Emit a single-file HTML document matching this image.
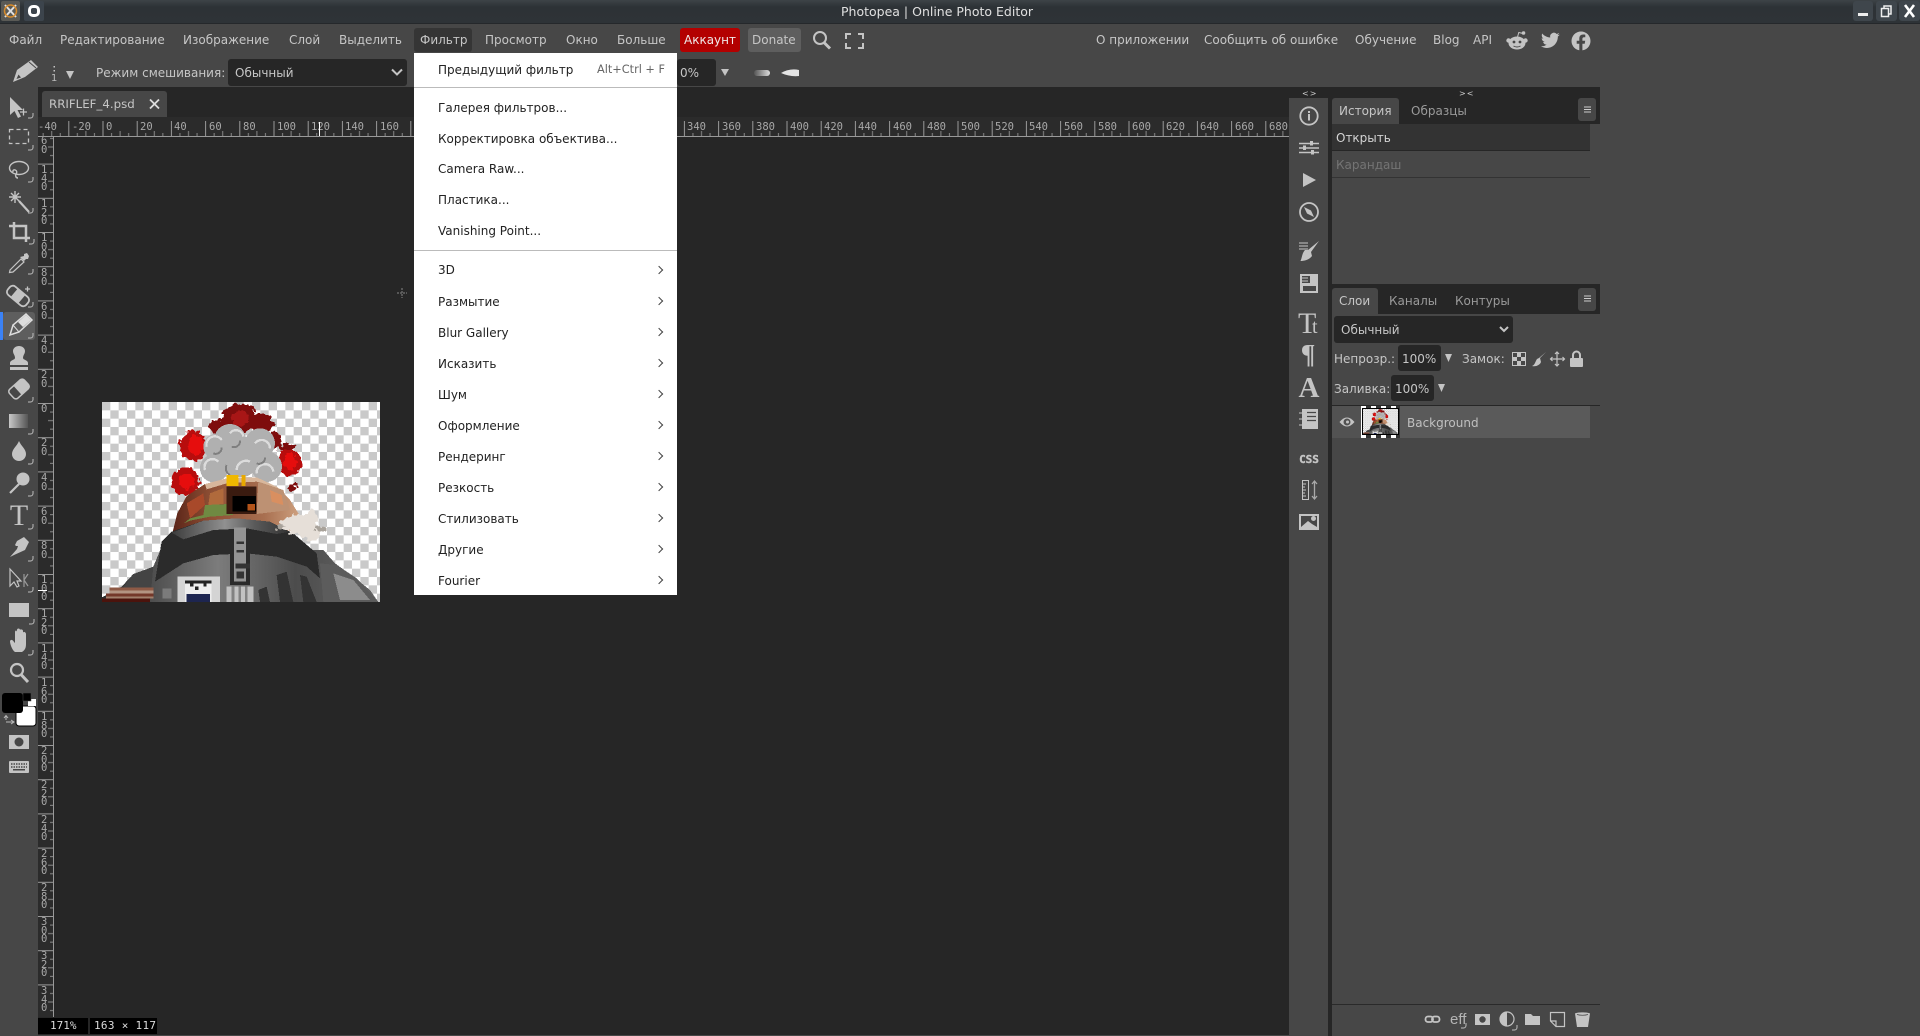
<!DOCTYPE html>
<html lang="ru"><head><meta charset="utf-8"><title>Photopea</title>
<style>
html,body{margin:0;padding:0;background:#474747;width:1920px;height:1036px;overflow:hidden}
body{position:relative;font-family:"DejaVu Sans","Liberation Sans",sans-serif;font-size:12px;color:#c6c6c6}
.a{position:absolute}
.t{position:absolute;white-space:nowrap;line-height:16px;height:16px}
.m{font-size:12px;color:#c6c6c6;top:32px}
.mi{position:absolute;left:438px;white-space:nowrap;color:#222;line-height:16px;font-size:12px}
.ch{position:absolute;left:656px;width:5px;height:5px;border-top:1.3px solid #444;border-right:1.3px solid #444;transform:rotate(45deg)}
.rt b{position:absolute;top:121px;font:10.5px/12px "DejaVu Sans Mono","Liberation Mono",monospace;color:#a8a8a8}
.rl b{position:absolute;left:41px;font:10.5px/8.6px "DejaVu Sans Mono","Liberation Mono",monospace;color:#a8a8a8;width:7px}
svg{position:absolute;left:0;top:0}
</style></head><body>
<!-- title bar -->
<div class="a" style="left:0;top:0;width:1920px;height:23px;background:linear-gradient(#3d4347,#2d3236 30%,#2e3337);border-bottom:1px solid #25282b"></div>
<div class="t" style="left:841px;top:4px;color:#e0e0e0;font-size:12.5px">Photopea | Online Photo Editor</div>
<div class="a" style="left:1px;top:1px;width:19px;height:20px;background:#5a5a56;border-radius:2px"></div>
<div class="a" style="left:24px;top:1px;width:20px;height:20px;background:#3c444c;border-radius:2px"></div>
<div class="a" style="left:1853px;top:1px;width:20px;height:20px;background:#3f464c;border-radius:3px"></div>
<div class="a" style="left:1876px;top:1px;width:21px;height:20px;background:#3f464c;border-radius:3px"></div>
<div class="a" style="left:1899px;top:1px;width:21px;height:20px;background:#3f464c;border-radius:3px"></div>

<!-- menu bar -->
<div class="a" style="left:414px;top:28px;width:58px;height:24px;background:#353535;border-radius:3px"></div>
<div class="t m" style="left:9px">Файл</div>
<div class="t m" style="left:60px">Редактирование</div>
<div class="t m" style="left:183px">Изображение</div>
<div class="t m" style="left:289px">Слой</div>
<div class="t m" style="left:339px">Выделить</div>
<div class="t m" style="left:420px">Фильтр</div>
<div class="t m" style="left:485px">Просмотр</div>
<div class="t m" style="left:566px">Окно</div>
<div class="t m" style="left:617px">Больше</div>
<div class="a" style="left:680px;top:28px;width:60px;height:24px;background:#b30000;border-radius:3px"></div>
<div class="t m" style="left:684px;color:#f0e8e8">Аккаунт</div>
<div class="a" style="left:748px;top:28px;width:53px;height:24px;background:#5e5e5e;border-radius:3px"></div>
<div class="t m" style="left:752px">Donate</div>
<div class="t m" style="left:1096px">О приложении</div>
<div class="t m" style="left:1204px">Сообщить об ошибке</div>
<div class="t m" style="left:1355px">Обучение</div>
<div class="t m" style="left:1433px">Blog</div>
<div class="t m" style="left:1473px">API</div>

<!-- options bar -->
<div class="t" style="left:51px;top:71px;font-size:10px;color:#bbb">1</div>
<div class="t" style="left:96px;top:65px">Режим смешивания:</div>
<div class="a" style="left:228px;top:59px;width:179px;height:27px;background:#262626;border-radius:3px"></div>
<div class="t" style="left:235px;top:65px">Обычный</div>
<div class="a" style="left:677px;top:59px;width:39px;height:27px;background:#262626;border-radius:3px"></div>
<div class="t" style="left:680px;top:65px">0%</div>

<!-- dark work area -->
<div class="a" style="left:38px;top:87px;width:1251px;height:948px;background:#262626"></div>
<div class="a" style="left:42px;top:91px;width:125px;height:26px;background:#474747;border-radius:3px 3px 0 0"></div>
<div class="t" style="left:49px;top:96px;color:#c6c6c6;font-size:11.8px">RRIFLEF_4.psd</div>
<div class="a" style="left:38px;top:117px;width:1251px;height:20px;background:#2b2b2b"></div>
<div class="a" style="left:38px;top:137px;width:15px;height:880px;background:#2b2b2b"></div>

<!-- top ruler labels -->
<div class="rt">
<b style="left:38px">-40</b><b style="left:72px">-20</b><b style="left:106px">0</b><b style="left:140px">20</b><b style="left:174px">40</b><b style="left:209px">60</b><b style="left:243px">80</b><b style="left:277px">100</b><b style="left:311px">120</b><b style="left:345px">140</b><b style="left:380px">160</b>
<b style="left:687px">340</b><b style="left:722px">360</b><b style="left:756px">380</b><b style="left:790px">400</b><b style="left:824px">420</b><b style="left:858px">440</b><b style="left:893px">460</b><b style="left:927px">480</b><b style="left:961px">500</b><b style="left:995px">520</b><b style="left:1029px">540</b><b style="left:1064px">560</b><b style="left:1098px">580</b><b style="left:1132px">600</b><b style="left:1166px">620</b><b style="left:1200px">640</b><b style="left:1235px">660</b><b style="left:1269px">680</b>
</div>
<!-- left ruler labels -->
<div class="rl">
<b style="top:137px">6<br>0</b>
<b style="top:166px">1<br>4<br>0</b>
<b style="top:200px">1<br>2<br>0</b>
<b style="top:234px">1<br>0<br>0</b>
<b style="top:269px">8<br>0</b>
<b style="top:303px">6<br>0</b>
<b style="top:337px">4<br>0</b>
<b style="top:371px">2<br>0</b>
<b style="top:405px">0</b>
<b style="top:439px">2<br>0</b>
<b style="top:474px">4<br>0</b>
<b style="top:508px">6<br>0</b>
<b style="top:542px">8<br>0</b>
<b style="top:576px">1<br>0<br>0</b>
<b style="top:610px">1<br>2<br>0</b>
<b style="top:645px">1<br>4<br>0</b>
<b style="top:679px">1<br>6<br>0</b>
<b style="top:713px">1<br>8<br>0</b>
<b style="top:747px">2<br>0<br>0</b>
<b style="top:781px">2<br>2<br>0</b>
<b style="top:816px">2<br>4<br>0</b>
<b style="top:850px">2<br>6<br>0</b>
<b style="top:884px">2<br>8<br>0</b>
<b style="top:918px">3<br>0<br>0</b>
<b style="top:952px">3<br>2<br>0</b>
<b style="top:987px">3<br>4<br>0</b>
</div>

<!-- status boxes -->
<div class="a" style="left:38px;top:1018px;width:50px;height:16px;background:#000"></div>
<div class="a" style="left:90px;top:1018px;width:67px;height:16px;background:#000"></div>
<div class="t" style="left:50px;top:1018px;color:#ddd;font-size:11px;font-family:'DejaVu Sans Mono',monospace">171%</div>
<div class="t" style="left:94px;top:1018px;color:#ddd;font-size:11px;letter-spacing:.3px;font-family:'DejaVu Sans Mono',monospace">163 × 117</div>

<!-- image -->
<svg width="278" height="200" viewBox="36 36 834 600" style="left:102px;top:402px" shape-rendering="crispEdges">
<defs>
<pattern id="chk" width="50" height="50" patternUnits="userSpaceOnUse" x="36" y="36"><rect x="-1" y="-1" width="52" height="52" fill="#fff"/><rect width="25" height="25" fill="#c9c9c9"/><rect x="25" y="25" width="25" height="25" fill="#c9c9c9"/></pattern>
<filter id="rg" x="-10%" y="-10%" width="120%" height="120%"><feTurbulence type="fractalNoise" baseFrequency=".07" numOctaves="2" seed="4" result="n"/><feDisplacementMap in="SourceGraphic" in2="n" scale="26" xChannelSelector="R" yChannelSelector="G"/></filter>
<linearGradient id="cl" x1="0" x2="1" y1="0" y2="0"><stop offset="0" stop-color="#3c3c3c"/><stop offset=".45" stop-color="#909090"/><stop offset=".7" stop-color="#5a5a5a"/><stop offset="1" stop-color="#333"/></linearGradient>
<linearGradient id="dm" x1="0" x2="1" y1="0" y2="0"><stop offset="0" stop-color="#5a2418"/><stop offset=".3" stop-color="#8f5035"/><stop offset=".7" stop-color="#a86f50"/><stop offset="1" stop-color="#d2a684"/></linearGradient>
<linearGradient id="bd" x1="0" x2="1" y1="0" y2="0"><stop offset="0" stop-color="#2c2c2c"/><stop offset=".42" stop-color="#7c7c7c"/><stop offset=".7" stop-color="#4c4c4c"/><stop offset="1" stop-color="#666"/></linearGradient>
<g id="robot">
<rect x="36" y="36" width="834" height="600" fill="url(#chk)"/>
<!-- blood blobs -->
<g filter="url(#rg)">
<g fill="#7e0a0a"><ellipse cx="448" cy="85" rx="52" ry="44"/><ellipse cx="390" cy="110" rx="34" ry="24"/><ellipse cx="515" cy="100" rx="36" ry="28"/><ellipse cx="555" cy="150" rx="20" ry="28"/><ellipse cx="606" cy="293" rx="15" ry="10"/><ellipse cx="592" cy="172" rx="24" ry="9"/></g>
<ellipse cx="450" cy="85" rx="26" ry="22" fill="#a81616"/>
<g fill="#b80808"><ellipse cx="310" cy="168" rx="40" ry="46"/><ellipse cx="287" cy="275" rx="42" ry="42"/><ellipse cx="597" cy="218" rx="38" ry="40"/></g>
<g fill="#e60f0f"><ellipse cx="318" cy="165" rx="24" ry="30"/><ellipse cx="600" cy="215" rx="20" ry="24"/><ellipse cx="290" cy="272" rx="24" ry="26"/></g>
</g>
<!-- smoke -->
<g fill="#b0b0b0"><circle cx="420" cy="150" r="48"/><circle cx="510" cy="160" r="45"/><circle cx="378" cy="170" r="38"/><circle cx="372" cy="235" r="42"/><circle cx="450" cy="200" r="62"/><circle cx="530" cy="230" r="46"/></g>
<g fill="none" stroke="#dcdcdc" stroke-width="7"><path d="M350 170a25 25 0 0 1 45-20"/><path d="M420 130a22 22 0 0 1 40 10"/><path d="M495 160a25 25 0 0 1 45 15"/><path d="M440 240a28 28 0 0 1 40-25"/><path d="M500 250a24 24 0 0 1 50-5"/><path d="M345 240a24 24 0 0 1 40-25"/></g>
<g fill="none" stroke="#7f7f7f" stroke-width="6"><path d="M370 190a18 18 0 0 0 25-18"/><path d="M500 220a18 18 0 0 0 25-18"/><path d="M425 170a18 18 0 0 0 25-18"/><path d="M420 255a22 22 0 0 1-10-30"/></g>
<!-- dome -->
<path d="M248 425L262 370L290 318L345 282L410 265L500 262L560 290L600 330L625 370L640 420L250 430Z" fill="url(#dm)"/>
<path d="M345 282L410 265L500 262L560 290L570 300L500 275L410 280L350 298Z" fill="#d8b79c"/>
<path d="M290 340L340 310L345 345L300 385Z" fill="#a8492a"/><path d="M360 310L400 295L400 342L355 345Z" fill="#b06a3c"/>
<path d="M282 400L300 385L340 375L345 345L420 342L430 375L360 380L300 392Z" fill="#6f8a42"/>
<path d="M410 290H500V372H410Z" fill="#3a1b10"/><path d="M428 318H498V365H428Z" fill="#000"/><path d="M472 342H495V362H472Z" fill="#b3541a"/>
<path d="M505 275L580 300L600 360L500 372Z" fill="#bd9173"/><path d="M540 300L575 315L580 345L545 335Z" fill="#d98f60"/>
<path d="M410 255H446V288H410Z" fill="#f0b800"/><path d="M455 255H466V288H455Z" fill="#e8a800"/>
<!-- lower body -->
<path d="M36 622L95 590L130 552L190 530L215 470L700 480L735 520L790 560L840 600L865 636H36Z" fill="url(#bd)"/>
<!-- collar -->
<path d="M245 425L340 392L440 385L540 395L610 430L680 490L690 565L650 530L560 500L470 490L370 495L280 520L195 575L215 455Z" fill="#2b2b2b"/>
<path d="M245 428L340 392L440 385L540 395L600 425L560 432L470 415L370 420L280 448Z" fill="url(#cl)"/>
<path d="M690 520L740 525L800 565L865 636H700Z" fill="#5c5c5c"/><path d="M730 550L790 570L840 630L750 630Z" fill="#8c8c8c"/>
<path d="M130 552L190 530L180 636H70Z" fill="#444"/>
<g fill="#333"><path d="M560 555L590 545L610 636H570Z"/><path d="M630 555L650 560L680 636H640Z"/><path d="M505 600L530 590L540 636H510Z"/></g>
<!-- center ladder -->
<path d="M420 490H480V585H420Z" fill="#2a2a2a"/><path d="M432 412H468V575H432Z" fill="#949494"/><g fill="#333"><path d="M440 455H462V462H440Z"/><path d="M440 480H462V487H440Z"/><path d="M436 520H480V535H436Z"/><path d="M440 545H462V565H440Z"/></g>
<path d="M410 590H490V636H410Z" fill="#c2c2c2"/><g fill="#828282"><path d="M425 590H433V636H425Z"/><path d="M445 590H453V636H445Z"/><path d="M465 590H473V636H465Z"/></g>
<!-- panel -->
<path d="M262 560H390V636H262Z" fill="#d4d4d4"/><path d="M285 572H365V636H285Z" fill="#eee"/><path d="M285 572H365V580H285Z" fill="#222"/><path d="M290 612H360V636H290Z" fill="#1d2550"/><path d="M300 580H310V590H300ZM340 580H350V590H340ZM315 590H325V600H315Z" fill="#222"/>
<path d="M218 595H245V625H218Z" fill="#7b7b7b"/>
<!-- brown bands -->
<path d="M58 592H190V602H58Z" fill="#8e5a46"/><path d="M48 610H190V620H48Z" fill="#74382a"/><path d="M36 625H180V636H36Z" fill="#4b130c"/><path d="M58 602H190V610H58Z" fill="#b39482"/><path d="M48 620H190V625H48Z" fill="#a17f6c"/>
<!-- white smoke -->
<g filter="url(#rg)"><g fill="#e6dfd8"><ellipse cx="630" cy="405" rx="52" ry="30"/><ellipse cx="665" cy="385" rx="20" ry="24"/><ellipse cx="600" cy="400" rx="30" ry="16"/><ellipse cx="665" cy="430" rx="30" ry="20"/></g>
<g fill="#a8a29a"><ellipse cx="690" cy="415" rx="16" ry="8"/><ellipse cx="570" cy="410" rx="14" ry="8"/></g></g>
</g></defs>
<use href="#robot"/>
</svg>

<!-- right column groups -->
<div class="a" style="left:1289px;top:98px;width:39px;height:130px;background:#474747"></div>
<div class="a" style="left:1289px;top:233px;width:39px;height:68px;background:#474747"></div>
<div class="a" style="left:1289px;top:305px;width:39px;height:132px;background:#474747"></div>
<div class="a" style="left:1289px;top:441px;width:39px;height:98px;background:#474747"></div>
<div class="a" style="left:1289px;top:544px;width:39px;height:492px;background:#474747"></div>
<div class="a" style="left:1289px;top:87px;width:311px;height:11px;background:#262626"></div>
<div class="a" style="left:1328px;top:87px;width:4px;height:949px;background:#262626"></div>
<div class="a" style="left:1280px;top:1035px;width:9px;height:1px;background:#474747"></div>
<div class="t" style="left:1302px;top:86px;font-size:8px;color:#ccc;letter-spacing:1px">&lt;&gt;</div>
<div class="t" style="left:1459px;top:86px;font-size:8px;color:#ccc;letter-spacing:1px">&gt;&lt;</div>

<!-- history panel -->
<div class="a" style="left:1332px;top:98px;width:268px;height:26px;background:#262626"></div>
<div class="a" style="left:1332px;top:98px;width:67px;height:26px;background:#474747;border-radius:3px 3px 0 0"></div>
<div class="t" style="left:1339px;top:103px">История</div>
<div class="t" style="left:1411px;top:103px;color:#9a9a9a">Образцы</div>
<div class="a" style="left:1578px;top:98px;width:18px;height:23px;background:#474747;border-radius:3px"></div>
<div class="a" style="left:1332px;top:124px;width:258px;height:26px;background:#333;border-bottom:1px solid #262626"></div>
<div class="t" style="left:1336px;top:130px;color:#d4d4d4">Открыть</div>
<div class="a" style="left:1332px;top:151px;width:258px;height:26px;border-bottom:1px solid #333"></div>
<div class="t" style="left:1336px;top:157px;color:#747474">Карандаш</div>

<!-- layers panel -->
<div class="a" style="left:1332px;top:284px;width:268px;height:30px;background:#262626"></div>
<div class="a" style="left:1332px;top:288px;width:46px;height:26px;background:#474747;border-radius:3px 3px 0 0"></div>
<div class="t" style="left:1339px;top:293px">Слои</div>
<div class="t" style="left:1389px;top:293px;color:#9a9a9a">Каналы</div>
<div class="t" style="left:1455px;top:293px;color:#9a9a9a">Контуры</div>
<div class="a" style="left:1578px;top:288px;width:18px;height:23px;background:#474747;border-radius:3px"></div>
<div class="a" style="left:1334px;top:316px;width:179px;height:27px;background:#262626;border-radius:3px"></div>
<div class="t" style="left:1341px;top:322px">Обычный</div>
<div class="t" style="left:1334px;top:351px">Непрозр.:</div>
<div class="a" style="left:1398px;top:345px;width:43px;height:26px;background:#262626;border-radius:3px"></div>
<div class="t" style="left:1402px;top:351px">100%</div>
<div class="t" style="left:1462px;top:351px">Замок:</div>
<div class="t" style="left:1334px;top:381px">Заливка:</div>
<div class="a" style="left:1391px;top:375px;width:43px;height:26px;background:#262626;border-radius:3px"></div>
<div class="t" style="left:1395px;top:381px">100%</div>
<div class="a" style="left:1332px;top:405px;width:268px;height:1px;background:#262626"></div>
<div class="a" style="left:1332px;top:406px;width:258px;height:32px;background:#5a5a5a"></div>
<div class="a" style="left:1332px;top:406px;width:29px;height:32px;background:#525252"></div>
<div class="t" style="left:1407px;top:415px;color:#c0c0c0">Background</div>
<div class="a" style="left:1361px;top:406px;width:39px;height:32px;background:repeating-linear-gradient(90deg,#fff 0 5px,#333 5px 10px)"></div>
<svg width="35" height="25" viewBox="36 36 834 600" preserveAspectRatio="none" style="left:1363px;top:409px;outline:1px solid #000"><use href="#robot"/></svg>
<div class="a" style="left:1332px;top:1004px;width:268px;height:1px;background:#2a2a2a"></div>

<!-- all icons overlay -->
<svg width="1920" height="1036" viewBox="0 0 1920 1036" fill="#c4c4c4">
<defs><path id="cn" d="M5 0V2.5A2.5 2.5 0 0 1 2.5 5H0" fill="none" stroke="#bdbdbd" stroke-width="1"/>
<linearGradient id="gr"><stop offset="0" stop-color="#c8c8c8"/><stop offset="1" stop-color="#555"/></linearGradient></defs>

<!-- title bar icons -->
<path d="M5 5L16 17M16 5L5 17" stroke="#e0e0e0" stroke-width="2"/><circle cx="10.5" cy="11" r="6" fill="none" stroke="#d58a2c" stroke-width="1.5"/>
<rect x="29.5" y="6.5" width="9" height="9" rx="3.5" fill="none" stroke="#fff" stroke-width="3"/>
<rect x="1858" y="13" width="10" height="3" fill="#eee"/>
<path d="M1881.5 8.5h7v8h-7zM1884 8.5v-2.5h7v8h-2.5" fill="none" stroke="#eee" stroke-width="1.5"/>
<path d="M1905 5L1914 17M1914 5L1905 17" stroke="#fff" stroke-width="2.6"/>

<!-- menu right icons -->
<circle cx="820" cy="38" r="6" fill="none" stroke="#c4c4c4" stroke-width="2"/><path d="M824 42.5L830 48.5" stroke="#c4c4c4" stroke-width="3"/>
<path d="M846 39v-5h5M858 34h5v5M863 43v5h-5M851 48h-5v-5" fill="none" stroke="#c4c4c4" stroke-width="2"/>
<!-- reddit -->
<g transform="translate(0 1)"><ellipse cx="1517" cy="42" rx="8.5" ry="6.5"/><circle cx="1508.5" cy="39.5" r="2.2"/><circle cx="1525.5" cy="39.5" r="2.2"/><circle cx="1523.5" cy="32" r="1.8"/><path d="M1517.5 36L1518.8 31.5L1523 32.5" fill="none" stroke="#c4c4c4" stroke-width="1"/><circle cx="1514" cy="41" r="1.4" fill="#474747"/><circle cx="1520" cy="41" r="1.4" fill="#474747"/><path d="M1513.5 45q3.5 2 7 0" fill="none" stroke="#474747" stroke-width="1"/>
<!-- twitter -->
<path transform="translate(1541 30) scale(.78)" d="M23.95 4.57a10 10 0 01-2.82.77 4.96 4.96 0 002.16-2.72c-.95.55-2 .95-3.12 1.17a4.92 4.92 0 00-8.38 4.48C7.69 8.09 4.07 6.13 1.64 3.16a4.82 4.82 0 00-.66 2.47c0 1.71.87 3.2 2.18 4.1a4.9 4.9 0 01-2.23-.61v.06c0 2.38 1.7 4.38 3.95 4.83a5 5 0 01-2.21.08 4.94 4.94 0 004.6 3.42A9.87 9.87 0 010 19.54a14 14 0 007.56 2.21c9.05 0 14-7.5 14-13.98 0-.21 0-.42-.02-.63a9.94 9.94 0 002.46-2.55z"/>
<!-- facebook -->
<circle cx="1581" cy="40" r="9.5"/><path d="M1579.3 50V42.8h-2.6v-3h2.6v-2.3c0-2.6 1.5-4 3.9-4 .8 0 1.6.1 2.1.2v2.6h-1.3c-1.2 0-1.6.8-1.6 1.5v2h2.8l-.5 3h-2.3V50z" fill="#474747"/></g>

<!-- options icons -->
<path d="M13 82L17 70L31 60L38 67L25 77ZM16.5 79L21 77.5L18.5 74.5Z" fill="#c4c4c4" fill-rule="evenodd"/><path d="M29 62L36 68" stroke="#474747" stroke-width="1"/>
<rect x="53.5" y="66" width="1.5" height="1.5"/><rect x="53.5" y="70" width="1.5" height="1.5"/>
<path d="M66 71H74L70 79Z"/>
<path d="M392 69.5L397 74.5L402 69.5" fill="none" stroke="#c4c4c4" stroke-width="2"/>
<path d="M721 69H729L725 76Z"/>
<defs><linearGradient id="b1"><stop offset="0" stop-color="#555"/><stop offset="1" stop-color="#ddd"/></linearGradient></defs>
<rect x="754" y="70" width="16" height="6" rx="3" fill="url(#b1)"/>
<path d="M781 73Q790 68 799 70V76Q790 77 781 73Z" fill="#e4e4e4"/>

<!-- tab close -->
<path d="M150 99.5L159 108.5M159 99.5L150 108.5" stroke="#ddd" stroke-width="1.8"/>

<!-- rulers ticks -->
<defs>
<pattern id="rt" width="34.2" height="20" x="102.5" y="117" patternUnits="userSpaceOnUse"><rect x="0" y="4" width="1" height="15" fill="#999"/><rect x="8.55" y="16" width="1" height="3" fill="#888"/><rect x="17.1" y="14" width="1" height="5" fill="#888"/><rect x="25.65" y="16" width="1" height="3" fill="#888"/></pattern>
<pattern id="rl" width="15" height="34.2" x="38" y="129.4" patternUnits="userSpaceOnUse"><rect x="0" y="0" width="15" height="1" fill="#999"/><rect x="12" y="8.55" width="3" height="1" fill="#888"/><rect x="10" y="17.1" width="5" height="1" fill="#888"/><rect x="12" y="25.65" width="3" height="1" fill="#888"/></pattern>
</defs>
<rect x="38" y="117" width="1251" height="20" fill="url(#rt)"/>
<rect x="38" y="136" width="1251" height="1" fill="#999"/>
<rect x="38" y="137" width="15" height="880" fill="url(#rl)"/>
<rect x="53" y="137" width="1" height="880" fill="#999"/>
<rect x="319" y="122" width="1" height="14" fill="#fff"/>
<rect x="38" y="590" width="9" height="1" fill="#fff"/>
<path d="M402 288v10M397 293h10" stroke="#666" stroke-width="1.5" stroke-dasharray="2 1"/>

<!-- selected tool -->
<rect x="3" y="312" width="32" height="28" rx="3" fill="#5e5e5e"/>
<rect x="0" y="312" width="3" height="28" fill="#3b82f6"/>

<!-- toolbar icons -->
<path d="M10 97V115L14.5 111L18 118L21 116.5L17.5 110H23Z"/><path d="M20 112h7M23.5 108.5v7" stroke="#c4c4c4" stroke-width="1.3"/><use href="#cn" x="28" y="113"/>
<rect x="9.5" y="129.5" width="19" height="14" fill="none" stroke="#c4c4c4" stroke-width="1.3" stroke-dasharray="4 3"/><use href="#cn" x="28" y="145"/>
<ellipse cx="19" cy="168" rx="9.5" ry="6.5" fill="none" stroke="#c4c4c4" stroke-width="1.4"/><path d="M13 172C12 168 19 170 16 174C15 176 16 178 18 178" fill="none" stroke="#c4c4c4" stroke-width="1.4"/><use href="#cn" x="28" y="177"/>
<path d="M15 191V203M9 197H21M11 193L19 201M19 193L11 201" stroke="#c4c4c4" stroke-width="1.4"/><path d="M19 201L29 212" stroke="#c4c4c4" stroke-width="2.2"/><use href="#cn" x="28" y="208"/>
<g transform="translate(0 1)"><path d="M9 225H26V241M14 221V237H30" fill="none" stroke="#c4c4c4" stroke-width="2.5"/></g><use href="#cn" x="29" y="239"/>
<path d="M10 270L21 259L24 262L13 272L9.5 272.5Z" fill="none" stroke="#c4c4c4" stroke-width="1.2"/><path d="M20 257L24 261L26 259L28 259L29 256L27 253L24 254L24 256Z"/><use href="#cn" x="28" y="269"/>
<g transform="rotate(40 18 296)"><rect x="6" y="290.5" width="24" height="11" rx="4" fill="none" stroke="#c4c4c4" stroke-width="1.8"/><rect x="13" y="290.5" width="10" height="11"/></g><path d="M25 289h5M27.5 286.5v5" stroke="#c4c4c4" stroke-width="1.3"/><use href="#cn" x="28" y="302"/>
<path d="M10 335L13 325L26 314L32 320L19 332Z" fill="none" stroke="#ddd" stroke-width="1.5"/><path d="M13 325L19 332L10 335Z" fill="none" stroke="#ddd" stroke-width="1"/><path d="M18 322L26 315L31 320L23 327Z" fill="#ddd"/><use href="#cn" x="28" y="333"/>
<g transform="translate(0 6)"><path d="M15 352C15 349 13 348 13 345C13 342 16 340 19 340C22 340 25 342 25 345C25 348 23 349 23 352C23 354 28 354 28 357V359H10V357C10 354 15 354 15 352Z"/><rect x="10" y="361" width="18" height="3"/></g>
<g transform="rotate(-42 19 389)"><rect x="9" y="383" width="20" height="12" rx="3" fill="none" stroke="#c4c4c4" stroke-width="1.5"/><path d="M17 383H26A3 3 0 0 1 29 386V392A3 3 0 0 1 26 395H17Z"/></g><use href="#cn" x="28" y="397"/>
<rect x="9" y="414" width="19" height="14" fill="url(#gr)"/><use href="#cn" x="28" y="429"/>
<path d="M19 441C21 446 26 449 26 454A7 7 0 0 1 12 454C12 449 17 446 19 441Z"/><use href="#cn" x="28" y="459"/>
<circle cx="23" cy="479" r="6.5"/><path d="M19 484L10 493" stroke="#c4c4c4" stroke-width="2.2"/>
<use href="#cn" x="28" y="491"/>
<text x="19" y="525" text-anchor="middle" font-family="Liberation Serif,serif" font-size="30" fill="#c4c4c4">T</text><use href="#cn" x="28" y="524"/>
<path d="M24 537L29 542L25 550L14 555L10 557L17 549L18 546L16 546L15 545L17 541Z"/><use href="#cn" x="28" y="556"/>
<path d="M10 569V586L14 582L17 587L19 586L17 581H21Z" fill="none" stroke="#c4c4c4" stroke-width="1.2"/><path d="M24 574V587M24 580L28 574M24 580L28 586" fill="none" stroke="#999" stroke-width="1.2"/><use href="#cn" x="28" y="587"/>
<rect x="9" y="603" width="20" height="14"/><use href="#cn" x="29" y="619"/>
<g transform="translate(0 -2)"><path d="M15 654C12 652 10 646 10 643C11 641 13 642 14 644L15 645V634C15 632 17 632 17 634V632C17 630 20 630 20 632V632C20 631 23 631 23 633V635C23 633 26 634 26 636V646C26 650 25 652 22 654Z"/></g><use href="#cn" x="28" y="650"/>
<circle cx="17" cy="670" r="6" fill="none" stroke="#c4c4c4" stroke-width="2.2"/><path d="M21.5 675L28 682" stroke="#c4c4c4" stroke-width="3"/>
<!-- colours -->
<rect x="16" y="706" width="20" height="20" rx="3" fill="#fff" stroke="#000" stroke-width="1"/>
<rect x="2" y="693" width="21" height="20" rx="3" fill="#000"/>
<rect x="28" y="699" width="8" height="7" fill="#fff"/><rect x="23" y="693" width="8" height="8" fill="#000" stroke="#474747" stroke-width=".5"/>
<path d="M6 720V716M4 718L6 715.5L8 718M6 722H13M11 720L14 722L11 724" fill="none" stroke="#bbb" stroke-width="1"/>
<rect x="9" y="735" width="20" height="14"/><circle cx="19" cy="742" r="4.5" fill="#474747"/>
<rect x="9" y="761" width="20" height="12" rx="1"/><path d="M11 764h16M11 767h16" stroke="#474747" stroke-width="1.5" stroke-dasharray="1.5 1"/><rect x="13" y="769" width="12" height="1.5" fill="#474747"/>

<!-- right column icons -->
<circle cx="1309" cy="116" r="8.7" fill="none" stroke="#c4c4c4" stroke-width="1.8"/><rect x="1308" y="114" width="2" height="6.5"/><rect x="1308" y="111" width="2" height="2"/>
<g transform="translate(0 -1)"><path d="M1299 144.5h20M1299 149h20M1299 153.5h20" stroke="#c4c4c4" stroke-width="1.5"/><rect x="1310" y="142" width="3" height="4.5"/><rect x="1303" y="146.5" width="3" height="4.5"/><rect x="1311" y="151" width="3" height="4.5"/></g>
<path d="M1303 173V187L1316 180Z"/>
<circle cx="1309" cy="212" r="9" fill="none" stroke="#c4c4c4" stroke-width="1.8"/><path d="M1304 207L1311 210.5L1314 217L1307 213.5Z"/>
<path d="M1299 243h9M1299 246h9M1299 249h9" stroke="#c4c4c4" stroke-width="1"/><path d="M1319 241L1311 252L1312 256C1309 260 1304 261 1300.500 261C1302 258 1302 253 1305 250L1308 250Z"/>
<rect x="1300" y="274" width="18" height="19"/><rect x="1302" y="276" width="8" height="7" fill="#474747"/><rect x="1303" y="286" width="13" height="5" fill="#474747"/><path d="M1302 278h6M1302 281h6" stroke="#c4c4c4"/>
<text x="1298" y="333" font-family="Liberation Serif,serif" font-size="30" fill="#c4c4c4">T</text><text x="1312" y="333" font-family="Liberation Serif,serif" font-size="20" fill="#c4c4c4">t</text>
<text x="1308" y="363" text-anchor="middle" font-family="Liberation Serif,serif" font-weight="bold" font-size="27" fill="#c4c4c4">¶</text>
<text x="1309" y="397" text-anchor="middle" font-family="Liberation Serif,serif" font-weight="bold" font-size="29" fill="#c4c4c4">A</text>
<rect x="1302" y="409" width="16" height="20"/><path d="M1299 413h5M1299 419h5M1299 425h5" stroke="#c4c4c4" stroke-width="1"/><path d="M1307 412.5h9M1307 416.5h9M1307 420.5h9" stroke="#474747" stroke-width="1.2"/>
<text x="1309" y="463" text-anchor="middle" font-family="DejaVu Sans Mono,monospace" font-weight="bold" font-size="11" fill="#c4c4c4" stroke="#c4c4c4" stroke-width=".4">CSS</text>
<rect x="1302.5" y="480.5" width="6" height="19" fill="none" stroke="#c4c4c4"/><path d="M1303 484h3M1303 487h2M1303 490h3M1303 493h2M1303 496h3" stroke="#c4c4c4"/><path d="M1314.5 481V499M1312 484L1314.5 481L1317 484M1312 496L1314.5 499L1317 496" fill="none" stroke="#aaa" stroke-width="1.3"/>
<rect x="1299" y="514" width="20" height="16"/><path d="M1301 527L1308 521L1312 524L1317 527V516H1301Z" fill="#474747"/><circle cx="1313.5" cy="518.5" r="2.5"/>

<!-- panel menu glyphs -->
<path d="M1584 107h7M1584 109.5h7M1584 112h7" stroke="#ccc" stroke-width="1"/>
<path d="M1584 296h7M1584 298.5h7M1584 301h7" stroke="#ccc" stroke-width="1"/>
<!-- select chevron & arrows -->
<path d="M1500 327L1504 331L1508 327" fill="none" stroke="#c4c4c4" stroke-width="2"/>
<path d="M1445 354H1452L1448.5 362Z"/><path d="M1438 384H1445L1441.5 392Z"/>
<!-- lock icons -->
<rect x="1512" y="352" width="14" height="14"/><path d="M1513 353h4v4h-4zM1521 353h4v4h-4zM1517 357h4v4h-4zM1513 361h4v4h-4zM1521 361h4v4h-4z" fill="#474747"/>
<path d="M1546 352L1540 358L1541 362C1540 365 1536 367 1532 366C1535 365 1535 362 1537 359L1539 358Z"/>
<path d="M1557 352V366M1550.5 359H1564.5M1555 354L1557 352L1559 354M1555 364L1557 366L1559 364M1552.5 357L1550.5 359L1552.5 361M1562.5 357L1564.5 359L1562.5 361" fill="none" stroke="#c4c4c4" stroke-width="1.2"/>
<rect x="1570" y="358" width="13" height="9" rx="1"/><path d="M1573 358V355A3.5 3.5 0 0 1 1580 355V358" fill="none" stroke="#c4c4c4" stroke-width="2"/>
<!-- eye -->
<path d="M1339.5 422Q1347 413 1354.500 422Q1347 431 1339.500 422Z"/><circle cx="1347" cy="422" r="3.5" fill="#525252"/><circle cx="1347.5" cy="422" r="1.5"/>
<!-- bottom icons -->
<rect x="1425.5" y="1016.5" width="7.5" height="5.5" rx="2.5" fill="none" stroke="#c4c4c4" stroke-width="1.8"/><rect x="1432" y="1016.5" width="7.5" height="5.5" rx="2.5" fill="none" stroke="#c4c4c4" stroke-width="1.8"/>
<text x="1450" y="1024" font-family="Liberation Sans,sans-serif" font-size="15" fill="#b4b4b4">eff</text><use href="#cn" x="1461" y="1023"/>
<rect x="1475" y="1014" width="15" height="11"/><circle cx="1482.5" cy="1019.5" r="3.2" fill="#474747"/>
<circle cx="1507" cy="1019" r="7" fill="none" stroke="#c4c4c4" stroke-width="1.2"/><path d="M1507 1012A7 7 0 0 0 1507 1026Z"/><use href="#cn" x="1512" y="1025"/>
<path d="M1525 1014H1531L1533 1016H1540V1025H1525Z"/>
<path d="M1550.5 1012.5H1564.5V1026.5H1556L1550.5 1021ZM1550.5 1021H1556V1026.5" fill="none" stroke="#c4c4c4" stroke-width="1.2"/>
<path d="M1575 1013.5C1577 1012 1588 1012 1590 1013.5L1588 1027H1577Z"/><path d="M1577 1014.5C1580 1015.5 1585 1015.5 1588 1014.5" fill="none" stroke="#474747" stroke-width=".8"/>
</svg>

<!-- filter dropdown -->
<div class="a" style="left:414px;top:53px;width:263px;height:542px;background:#fff"></div>
<div class="a" style="left:414px;top:87px;width:263px;height:1px;background:#bbb"></div>
<div class="a" style="left:414px;top:250px;width:263px;height:1px;background:#bbb"></div>
<div class="mi" style="top:62px">Предыдущий фильтр</div>
<div class="mi" style="top:62px;left:auto;right:1255px;color:#666;font-size:11.3px">Alt+Ctrl + F</div>
<div class="mi" style="top:100px">Галерея фильтров...</div>
<div class="mi" style="top:131px">Корректировка объектива...</div>
<div class="mi" style="top:161px">Camera Raw...</div>
<div class="mi" style="top:192px">Пластика...</div>
<div class="mi" style="top:223px">Vanishing Point...</div>
<div class="mi" style="top:262px">3D</div><i class="ch" style="top:267px"></i>
<div class="mi" style="top:294px">Размытие</div><i class="ch" style="top:298px"></i>
<div class="mi" style="top:325px">Blur Gallery</div><i class="ch" style="top:329px"></i>
<div class="mi" style="top:356px">Исказить</div><i class="ch" style="top:360px"></i>
<div class="mi" style="top:387px">Шум</div><i class="ch" style="top:391px"></i>
<div class="mi" style="top:418px">Оформление</div><i class="ch" style="top:422px"></i>
<div class="mi" style="top:449px">Рендеринг</div><i class="ch" style="top:453px"></i>
<div class="mi" style="top:480px">Резкость</div><i class="ch" style="top:484px"></i>
<div class="mi" style="top:511px">Стилизовать</div><i class="ch" style="top:515px"></i>
<div class="mi" style="top:542px">Другие</div><i class="ch" style="top:546px"></i>
<div class="mi" style="top:573px">Fourier</div><i class="ch" style="top:577px"></i>
</body></html>
